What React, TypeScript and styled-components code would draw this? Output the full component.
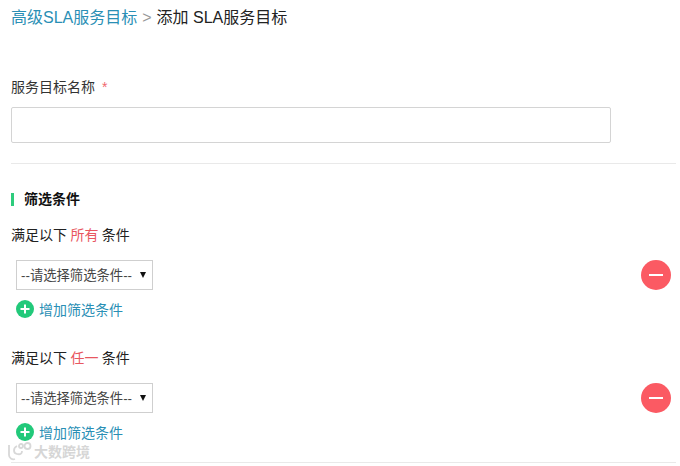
import styled, { createGlobalStyle } from 'styled-components';

const GlobalStyle = createGlobalStyle`
  html, body {
    margin: 0;
    padding: 0;
    background: #fff;
  }
  body {
    font-family: "Liberation Sans", "Noto Sans CJK SC", sans-serif;
    font-size: 14px;
    color: #333;
  }
`;

const Page = styled.div`
  position: relative;
  width: 680px;
  height: 466px;
  overflow: hidden;
  box-sizing: border-box;
  padding: 6px 4px 0 11px;
`;

const Breadcrumb = styled.div`
  height: 24px;
  line-height: 24px;
  font-size: 16px;
  color: #222;
`;

const CrumbLink = styled.a`
  color: #2a8fb5;
`;

const CrumbSep = styled.span`
  color: #999;
  margin: 0 5px;
`;

const FieldLabel = styled.label`
  display: block;
  margin-top: 47px;
  height: 20px;
  line-height: 20px;
  color: #333;
`;

const Required = styled.span`
  color: #f0686e;
  margin-left: 7px;
`;

const NameInput = styled.input`
  display: block;
  box-sizing: border-box;
  width: 600px;
  height: 36px;
  margin-top: 10px;
  border: 1px solid #d4d4d4;
  border-radius: 2px;
  background: #fff;
  outline: none;
`;

const Divider = styled.div<{ $gap: number }>`
  height: 1px;
  background: #e9e9e9;
  margin-top: ${(p) => p.$gap}px;
`;

const SectionTitle = styled.h3`
  margin: 29px 0 0;
  height: 13px;
  line-height: 13px;
  padding-left: 10px;
  border-left: 3px solid #2ecc7d;
  font-size: 14px;
  font-weight: 700;
  color: #111;
`;

const Group = styled.section<{ $gap: number }>`
  margin-top: ${(p) => p.$gap}px;
`;

const GroupTitle = styled.div`
  height: 20px;
  line-height: 20px;
  color: #222;
  word-spacing: -0.5px;
`;

const Keyword = styled.span`
  color: #e8575f;
`;

const ConditionRow = styled.div`
  display: flex;
  align-items: center;
  justify-content: space-between;
  margin-top: 15px;
  padding: 0 5px;
`;

const SelectWrap = styled.div`
  position: relative;
  width: 137px;
  height: 30px;
`;

const ConditionSelect = styled.select`
  display: block;
  box-sizing: border-box;
  width: 100%;
  height: 100%;
  padding: 0 4px;
  border: 1px solid #cfcfcf;
  border-radius: 0;
  background: #fff;
  color: #444;
  font-family: inherit;
  font-size: 13.33px;
  outline: none;
  appearance: none;
`;

const SelectArrow = styled.span`
  position: absolute;
  left: 124px;
  top: 12px;
  width: 0;
  height: 0;
  border-left: 3px solid transparent;
  border-right: 3px solid transparent;
  border-top: 6px solid #111;
  pointer-events: none;
`;

const RemoveButton = styled.button`
  display: flex;
  align-items: center;
  justify-content: center;
  width: 30px;
  height: 30px;
  padding: 0;
  border: none;
  border-radius: 50%;
  background: #fb5a63;
`;

const AddLink = styled.a`
  display: flex;
  align-items: center;
  gap: 5px;
  margin: 9px 0 0 5px;
  height: 20px;
  line-height: 20px;
  color: #2a8fb5;
`;

const AddLabel = styled.span`
  padding-top: 2px;
`;

const Watermark = styled.div`
  position: absolute;
  left: 7px;
  top: 441px;
  display: flex;
  align-items: center;
  gap: 2px;
  color: #d6d6d6;
  font-size: 14px;
  font-weight: 700;
  line-height: 22px;
`;

const PlusIcon = () => (
  <svg width="18" height="18" viewBox="0 0 18 18">
    <circle cx="9" cy="9" r="9" fill="#22c97a" />
    <path d="M9 4.5v9M4.5 9h9" stroke="#fff" strokeWidth="2" />
  </svg>
);

const MinusIcon = () => (
  <svg width="14" height="2" viewBox="0 0 14 2">
    <rect width="14" height="2" fill="#fff" />
  </svg>
);

const WatermarkLogo = () => (
  <svg width="25" height="20" viewBox="0 0 25 20" fill="none" stroke="#d8d8d8" strokeWidth="1.8">
    <path d="M2 3v10c0 3 3 5 6 4" />
    <path d="M10 4c-4 2-4 7 0 8s5-1 5-3" />
    <circle cx="14" cy="4" r="2" />
    <circle cx="20.5" cy="4" r="3" />
  </svg>
);

const ConditionGroup = ({ keyword, gap }: { keyword: string; gap: number }) => (
  <Group $gap={gap}>
    <GroupTitle>
      满足以下 <Keyword>{keyword}</Keyword> 条件
    </GroupTitle>
    <ConditionRow>
      <SelectWrap>
        <ConditionSelect defaultValue="">
          <option value="">--请选择筛选条件--</option>
        </ConditionSelect>
        <SelectArrow />
      </SelectWrap>
      <RemoveButton type="button">
        <MinusIcon />
      </RemoveButton>
    </ConditionRow>
    <AddLink>
      <PlusIcon />
      <AddLabel>增加筛选条件</AddLabel>
    </AddLink>
  </Group>
);

export default function App() {
  return (
    <Page>
      <GlobalStyle />
      <Breadcrumb>
        <CrumbLink>高级SLA服务目标</CrumbLink>
        <CrumbSep>&gt;</CrumbSep>添加 SLA服务目标
      </Breadcrumb>
      <FieldLabel>
        服务目标名称<Required>*</Required>
      </FieldLabel>
      <NameInput />
      <Divider $gap={20} />
      <SectionTitle>筛选条件</SectionTitle>
      <ConditionGroup keyword="所有" gap={19} />
      <ConditionGroup keyword="任一" gap={29} />
      <Divider $gap={20} />
      <Watermark>
        <WatermarkLogo />
        大数跨境
      </Watermark>
    </Page>
  );
}
